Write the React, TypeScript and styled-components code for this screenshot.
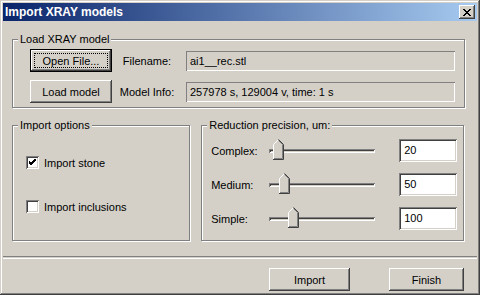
import styled, { createGlobalStyle } from 'styled-components';

const GlobalStyle = createGlobalStyle`
  html, body {
    margin: 0;
    padding: 0;
    background: #d4d0c8;
  }
  body {
    font-family: "Liberation Sans", Arial, sans-serif;
    font-size: 11px;
    color: #000;
  }
`

const Window = styled.div`
  width: 480px;
  height: 295px;
  box-sizing: border-box;
  padding: 3px;
  display: flex;
  flex-direction: column;
  background: #d4d0c8;
  box-shadow: inset -1px -1px #404040, inset 1px 1px #d4d0c8,
    inset -2px -2px #808080, inset 2px 2px #ffffff;
`

const TitleBar = styled.div`
  height: 18px;
  display: flex;
  align-items: center;
  padding: 0 2px;
  background: linear-gradient(to right, #0a246a, #a6caf0);
`

const Title = styled.div`
  color: #fff;
  font-weight: bold;
  font-size: 12px;
  line-height: 14px;
`

const CloseButton = styled.div`
  margin-left: auto;
  width: 16px;
  height: 14px;
  display: flex;
  align-items: center;
  justify-content: center;
  background: #d4d0c8;
  box-shadow: inset -1px -1px #404040, inset 1px 1px #ffffff,
    inset -2px -2px #808080, inset 2px 2px #d4d0c8;
`

const Content = styled.div`
  padding: 12px 13px 0 9px;
  display: flex;
  flex-direction: column;
  gap: 11px;
`

const Group = styled.fieldset<{ $width: number; $height: number }>`
  margin: 0;
  padding: 0;
  width: ${p => p.$width}px;
  height: ${p => p.$height}px;
  box-sizing: border-box;
  border: 1px solid #808080;
  box-shadow: inset 1px 1px #fff, 1px 1px #fff;
`

const Legend = styled.legend`
  margin-left: 5px;
  padding: 0 2px;
  line-height: 13px;
  background: #d4d0c8;
`

const LoadGrid = styled.div`
  display: grid;
  grid-template-columns: 82px 74px 269px;
  grid-auto-rows: 23px;
  row-gap: 8px;
  align-items: center;
  padding: 3px 0 0 17px;
`

const Button = styled.div<{ $width: number; $default?: boolean }>`
  position: relative;
  width: ${p => p.$width}px;
  height: 23px;
  box-sizing: border-box;
  display: flex;
  align-items: center;
  justify-content: center;
  background: #d4d0c8;
  box-shadow: ${p =>
    p.$default
      ? 'inset -1px -1px #000, inset 1px 1px #000, inset -2px -2px #404040, inset 2px 2px #fff, inset -3px -3px #808080'
      : 'inset -1px -1px #404040, inset 1px 1px #fff, inset -2px -2px #808080'};
  ${p =>
    p.$default &&
    `&::after {
      content: '';
      position: absolute;
      inset: 4px;
      border: 1px dotted #000;
    }`}
`

const FieldLabel = styled.div`
  text-align: center;
  padding-right: 4px;
`

const ReadField = styled.div`
  height: 20px;
  box-sizing: border-box;
  padding: 3px 0 0 4px;
  line-height: 14px;
  background: #d4d0c8;
  box-shadow: inset 1px 1px #808080, inset -1px -1px #fff;
`

const Columns = styled.div`
  display: flex;
  gap: 11px;
`

const CheckList = styled.div`
  display: flex;
  flex-direction: column;
  gap: 31px;
  padding: 24px 0 0 13px;
`

const CheckRow = styled.label`
  display: flex;
  align-items: center;
  gap: 5px;
  height: 13px;
`

const Box = styled.span`
  width: 13px;
  height: 13px;
  box-sizing: border-box;
  display: flex;
  align-items: center;
  justify-content: center;
  background: #fff;
  box-shadow: inset 1px 1px #808080, inset -1px -1px #fff,
    inset 2px 2px #404040, inset -2px -2px #d4d0c8;
`

const SliderList = styled.div`
  display: flex;
  flex-direction: column;
  gap: 11px;
  padding: 7px 0 0 9px;
`

const SliderRow = styled.div`
  display: grid;
  grid-template-columns: 58px 106px 24px 58px;
  height: 23px;
  align-items: center;
`

const Track = styled.div`
  position: relative;
  height: 4px;
  box-shadow: inset 1px 1px #808080, inset -1px -1px #fff,
    inset 2px 2px #404040, inset -2px -2px #d4d0c8;
`

const Thumb = styled.svg`
  position: absolute;
  top: -10px;
`

const EditBox = styled.div`
  grid-column: 4;
  height: 23px;
  box-sizing: border-box;
  padding: 4px 0 0 5px;
  line-height: 14px;
  background: #fff;
  box-shadow: inset 1px 1px #808080, inset -1px -1px #fff,
    inset 2px 2px #404040, inset -2px -2px #d4d0c8;
`

const Separator = styled.div`
  margin-top: 15px;
  height: 1px;
  border-top: 1px solid #808080;
  border-bottom: 1px solid #fff;
`

const Footer = styled.div`
  display: flex;
  justify-content: flex-end;
  gap: 39px;
  padding: 9px 13px 0 0;
`

function SliderThumb({ offset }: { offset: number }) {
  return (
    <Thumb width="11" height="21" viewBox="0 0 11 21" style={{ left: offset }}>
      <path d="M0.5 5.5 L5.5 0.5 L10.5 5.5 V20.5 H0.5 Z" fill="#d4d0c8" />
      <path d="M0.5 20 V5.5 L5 1" stroke="#fff" fill="none" />
      <path d="M5.5 0.5 L10.5 5.5 V20.5 H0" stroke="#404040" fill="none" />
      <path d="M5.5 1.5 L9.5 5.5 V19.5 H1" stroke="#808080" fill="none" />
    </Thumb>
  )
}

const sliders = [
  { label: 'Complex:', value: '20', offset: 4 },
  { label: 'Medium:', value: '50', offset: 10 },
  { label: 'Simple:', value: '100', offset: 19 },
]

export default function App() {
  return (
    <Window>
      <GlobalStyle />
      <TitleBar>
        <Title>Import XRAY models</Title>
        <CloseButton>
          <svg width="8" height="7" viewBox="0 0 8 7">
            <path d="M0 0 L7 7 M1 0 L8 7 M7 0 L0 7 M8 0 L1 7" stroke="#000" strokeWidth="1" />
          </svg>
        </CloseButton>
      </TitleBar>

      <Content>
        <Group $width={453} $height={75}>
          <Legend>Load XRAY model</Legend>
          <LoadGrid>
            <Button $width={82} $default>Open File...</Button>
            <FieldLabel>Filename:</FieldLabel>
            <ReadField>ai1__rec.stl</ReadField>
            <Button $width={82}>Load model</Button>
            <FieldLabel>Model Info:</FieldLabel>
            <ReadField>257978 s, 129004 v, time: 1 s</ReadField>
          </LoadGrid>
        </Group>

        <Columns>
          <Group $width={179} $height={122}>
            <Legend>Import options</Legend>
            <CheckList>
              <CheckRow>
                <Box>
                  <svg width="7" height="7" viewBox="0 0 7 7">
                    <path d="M0 2 L2 4 L7 -1 M0 3 L2 5 L7 0 M0 4 L2 6 L7 1" stroke="#000" fill="none" />
                  </svg>
                </Box>
                Import stone
              </CheckRow>
              <CheckRow>
                <Box />
                Import inclusions
              </CheckRow>
            </CheckList>
          </Group>

          <Group $width={264} $height={122}>
            <Legend>Reduction precision, um:</Legend>
            <SliderList>
              {sliders.map(s => (
                <SliderRow key={s.label}>
                  <div>{s.label}</div>
                  <Track>
                    <SliderThumb offset={s.offset} />
                  </Track>
                  <EditBox>{s.value}</EditBox>
                </SliderRow>
              ))}
            </SliderList>
          </Group>
        </Columns>
      </Content>

      <Separator />

      <Footer>
        <Button $width={81}>Import</Button>
        <Button $width={75}>Finish</Button>
      </Footer>
    </Window>
  )
}
